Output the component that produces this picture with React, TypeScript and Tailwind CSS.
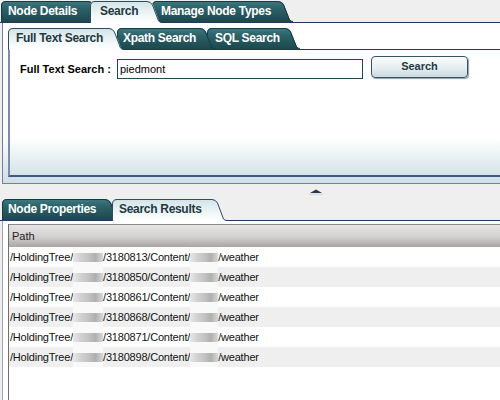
import React, { useId } from "react";

type TabProps = {
  label: string;
  w: number;
  h: number;
  active?: boolean;
  className: string;
  textClass: string;
};

function Tab({ label, w, h, active, className, textClass }: TabProps) {
  const id = "g" + useId().replace(/[^a-zA-Z0-9]/g, "");
  const fill = `M0,${h} L0,5 Q0,0 5,0 L${w - 15},0 Q${w - 11},0 ${w - 9},3.5 L${w - 3},${h - 2} Q${w - 1.5},${h} ${w},${h} Z`;
  const line = `M0.5,${h} L0.5,5 Q0.5,0.5 5,0.5 L${w - 15},0.5 Q${w - 11.5},0.5 ${w - 9.5},4 L${w - 3.5},${h - 2} Q${w - 2},${h - 0.5} ${w},${h - 0.5}`;
  return (
    <div className={`relative shrink-0 ${className}`}>
      <svg className="absolute left-0 top-0" width={w} height={h} viewBox={`0 0 ${w} ${h}`}>
        <defs>
          <linearGradient id={id} x1="0" y1="0" x2="0" y2="1">
            {active ? (
              <>
                <stop offset="0" stopColor="#d2e2e7" />
                <stop offset="0.75" stopColor="#f7fafb" />
                <stop offset="1" stopColor="#ffffff" />
              </>
            ) : (
              <>
                <stop offset="0" stopColor="#3f7a82" />
                <stop offset="0.35" stopColor="#2c6269" />
                <stop offset="1" stopColor="#1c474d" />
              </>
            )}
          </linearGradient>
        </defs>
        <path d={fill} fill={`url(#${id})`} />
        <path d={line} fill="none" stroke={active ? "#2d4d5b" : "#173a40"} strokeWidth="1" />
      </svg>
      <span
        className={`relative block whitespace-nowrap text-[12px] font-bold leading-[21px] tracking-[-0.3px] ${
          active ? "text-[#1d3a42]" : "text-white"
        } ${textClass}`}
      >
        {label}
      </span>
    </div>
  );
}

function Blur({ w }: { w: string }) {
  return (
    <span className={`inline-block h-[20px] align-top bg-[#f9f9f9] ${w}`}>
      <span className="mt-[6px] block h-[9px] w-full bg-[linear-gradient(90deg,#e8e8e8,#d2d2d2_25%,#c4c4c4_50%,#b0b0b0_75%,#d8d8d8)]" />
    </span>
  );
}

const rows = ["3180813", "3180850", "3180861", "3180868", "3180871", "3180898"];

export default function App() {
  return (
    <div className="h-[400px] w-[500px] overflow-hidden bg-[#efefef] font-['Liberation_Sans',Arial,sans-serif]">
      {/* top tabs */}
      <div className="flex h-[23px] items-end border-b border-[#1f3a5a] pl-px">
        <Tab label="Node Details" w={102} h={21} className="z-[3] mr-[-13px] h-[21px] w-[102px]" textClass="pl-[7px]" />
        <Tab label="Search" w={72} h={22} active className="z-10 mb-[-1px] mr-[-10px] h-[22px] w-[72px]" textClass="pl-[10px]" />
        <Tab label="Manage Node Types" w={141} h={21} className="z-[1] h-[21px] w-[141px]" textClass="pl-[9px]" />
      </div>

      {/* outer panel */}
      <div className="ml-[2px] h-[161px] border-b border-l border-[#6d82a3] bg-[linear-gradient(180deg,#ffffff_0%,#ffffff_72%,#dde9ec_90%,#cfdfe4_100%)] pl-[5px] pt-[5px]">
        <div className="flex h-[22px] items-end border-b border-[#1f3a5a]">
          <Tab label="Full Text Search" w={116} h={22} active className="z-10 mb-[-1px] mr-[-7px] h-[22px] w-[116px]" textClass="pl-[8px]" />
          <Tab label="Xpath Search" w={98} h={21} className="z-[2] mr-[-8px] h-[21px] w-[98px]" textClass="pl-[6px]" />
          <Tab label="SQL Search" w={93} h={21} className="z-[1] h-[21px] w-[93px]" textClass="pl-[8px]" />
        </div>
        <div className="h-[127px] border-b-2 border-l-2 border-b-[#3a5a80] border-l-[#7d8da8] pl-[10px]">
          <div className="flex items-start pt-[6px]">
            <span className="mt-[6px] w-[97px] text-[11px] font-bold leading-[14px] text-black">Full Text Search :</span>
            <div className="mt-[3px] flex h-[20px] w-[246px] items-center border border-[#1a4753] bg-white pl-[2px] text-[11px] text-black">
              piedmont
            </div>
            <div className="ml-[8px] flex h-[22px] w-[97px] items-center justify-center rounded-[4px] border border-[#3b5563] bg-[linear-gradient(180deg,#fbfdfd,#e6eef0_55%,#cad9de)] pb-[1px] text-[11px] font-bold text-[#1f3b45] shadow-[1px_1px_1px_#8c9ca3]">
              Search
            </div>
          </div>
        </div>
      </div>

      {/* splitter */}
      <div className="h-[15px] pl-[309px] pt-[5px]">
        <svg width="14" height="6" viewBox="0 0 14 6">
          <path d="M1,4 L7,0.5 L13,4 Z" fill="#25394f" />
          <rect x="0" y="4.5" width="14" height="1.5" fill="#dcdcdc" />
        </svg>
      </div>

      {/* bottom tabs */}
      <div className="flex h-[22px] items-end border-b border-[#1f3a5a] pl-[2px]">
        <Tab label="Node Properties" w={118} h={21} className="z-[2] mr-[-8px] h-[21px] w-[118px]" textClass="pl-[6px]" />
        <Tab label="Search Results" w={115} h={22} active className="z-10 mb-[-1px] h-[22px] w-[115px]" textClass="pl-[7px]" />
      </div>

      {/* bottom panel */}
      <div className="ml-[2px] h-[200px] border-l border-[#98a3b6] bg-white pl-[5px] pt-[3px]">
        <div className="h-full border-l border-[#6e6e6e]">
          <div className="flex h-[23px] items-center border-t border-[#8a8a8a] bg-[linear-gradient(180deg,#e6e4e4,#d2cfcf_55%,#a9a5a5)] pl-[3px] text-[11px] text-[#222]">
            Path
          </div>
          {rows.map((r, i) => (
            <div
              key={r}
              className={`flex h-[20px] items-start whitespace-nowrap pl-[1px] text-[11px] leading-[20px] tracking-[-0.2px] text-[#111] ${
                i % 2 === 1 ? "bg-[#eeefee]" : "bg-white"
              }`}
            >
              <span>/HoldingTree/</span>
              <Blur w="w-[30px]" />
              <span>/{r}/Content/</span>
              <Blur w="w-[28px]" />
              <span>/weather</span>
            </div>
          ))}
        </div>
      </div>
    </div>
  );
}
